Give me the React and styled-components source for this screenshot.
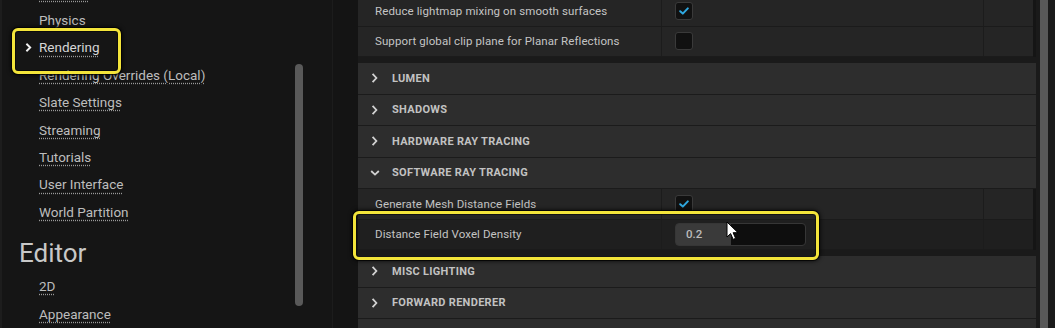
import React from 'react';
import styled, { createGlobalStyle } from 'styled-components';

const Global = createGlobalStyle`
  html, body {
    margin: 0;
    padding: 0;
    background: #151515;
    overflow: hidden;
  }
  * {
    box-sizing: border-box;
  }
`;

const Page = styled.div`
  position: relative;
  display: flex;
  width: 1055px;
  height: 328px;
  overflow: hidden;
  background: #151515;
  font-family: Roboto, 'Liberation Sans', sans-serif;
`;

/* left settings tree */
const Sidebar = styled.div`
  display: flex;
  width: 332px;
  border-left: 2px solid #1d1d1d;
  background: #151515;
`;

const NavList = styled.div`
  flex: 1;
  display: flex;
  flex-direction: column;
  margin-top: -21px;
`;

const NavItem = styled.div`
  display: flex;
  align-items: center;
  height: 27.4px;
  flex-shrink: 0;
  padding-left: ${p => (p.active ? '22px' : '37px')};
  font-size: 13.5px;
  color: ${p => (p.active ? '#d6d6d6' : '#bdbdbd')};

  span {
    text-decoration: underline dotted #9a9a9a;
    text-underline-offset: 3px;
  }
`;

const NavChevron = styled.svg`
  width: 9px;
  height: 11px;
  margin-right: 6px;
`;

const SectionTitle = styled.div`
  height: 40px;
  flex-shrink: 0;
  display: flex;
  align-items: center;
  padding-left: 17px;
  margin-top: 7px;
  font-size: 26px;
  color: #c8c8c8;
`;

const SideTrack = styled.div`
  width: 8px;
  margin-right: 29px;
`;

const Thumb = styled.div`
  width: 8px;
  height: ${p => p.h}px;
  margin-top: ${p => p.top}px;
  border-radius: 4px;
  background: #595959;
`;

const Gutter = styled.div`
  width: 26px;
  border-left: 1px solid #1c1c1c;
  background: #141414;
`;

/* details panel */
const Main = styled.div`
  flex: 1;
  display: flex;
`;

const Rows = styled.div`
  width: 678px;
  display: flex;
  flex-direction: column;
  margin-top: -4px;
`;

const PropRow = styled.div`
  display: grid;
  grid-template-columns: 304px 322px 1fr;
  height: 30.5px;
  flex-shrink: 0;
  background: ${p => (p.dim ? '#1f1f1f' : '#252525')};
  border-bottom: 1px solid #1b1b1b;
  margin-right: 3px;
`;

const NameCell = styled.div`
  display: flex;
  align-items: center;
  padding-left: 17px;
  font-size: 11.5px;
  letter-spacing: 0.1px;
  color: #c4c4c4;
  border-right: 1px solid #1c1c1c;
`;

const ValueCell = styled.div`
  display: flex;
  align-items: center;
  padding-left: 13px;
  border-right: 1px solid #1c1c1c;
`;

const Box = styled.div`
  width: 18px;
  height: 18px;
  border-radius: 3px;
  background: #111;
  border: 1px solid #3a3a3a;
  display: flex;
  align-items: center;
  justify-content: center;
`;

const NumberField = styled.div`
  width: 131px;
  height: 23px;
  display: flex;
  align-items: center;
  padding-left: 10px;
  border: 1px solid #363636;
  border-radius: 4px;
  background: linear-gradient(to right, #3a3a3a 55px, #0e0e0e 55px);
  font-size: 11.5px;
  font-weight: 500;
  color: #bcbcbc;
`;

const Header = styled.div`
  display: flex;
  align-items: center;
  height: 31.5px;
  flex-shrink: 0;
  padding-left: 12px;
  background: #2d2d2d;
  border-bottom: 1px solid #1b1b1b;
  font-size: 11px;
  font-weight: 700;
  letter-spacing: 0.3px;
  color: #c2c2c2;
`;

const HeaderChevron = styled.svg`
  width: 10px;
  height: 12px;
  margin-right: 12px;
`;

const Gap = styled.div`
  height: 6px;
  flex-shrink: 0;
  background: #1a1a1a;
`;

const RightTrack = styled.div`
  width: 19px;
  padding-left: 4px;
  background: #1a1a1a;
`;

const RightBar = styled.div`
  width: 8px;
  height: 100%;
  background: #585858;
`;

/* overlays */
const Highlight = styled.div`
  position: absolute;
  left: ${p => p.x}px;
  top: ${p => p.y}px;
  width: ${p => p.w}px;
  height: ${p => p.h}px;
  border: 3px solid #f3e43a;
  border-radius: 6px;
  box-shadow: 0 0 0 1px rgba(0, 0, 0, 0.7), 0 0 4px 1px rgba(0, 0, 0, 0.8),
    inset 0 0 0 1px rgba(0, 0, 0, 0.5);
  pointer-events: none;
`;

const Cursor = styled.svg`
  position: absolute;
  left: 726px;
  top: 221px;
  width: 14px;
  height: 20px;
`;

const Check = () => (
  <svg width="10" height="8" viewBox="0 0 10 8">
    <path d="M1.2 4.2 L3.8 6.6 L8.8 1.4" fill="none" stroke="#2fa8e0" strokeWidth="2" strokeLinecap="round" strokeLinejoin="round" />
  </svg>
);

const Chevron = ({ down }) => (
  <HeaderChevron viewBox="0 0 10 12">
    {down ? (
      <path d="M1.2 4 L5 7.6 L8.8 4" fill="none" stroke="#d2d2d2" strokeWidth="1.8" />
    ) : (
      <path d="M2.6 1.8 L6.4 6 L2.6 10.2" fill="none" stroke="#d2d2d2" strokeWidth="1.8" />
    )}
  </HeaderChevron>
);

const navTop = ['Network', 'Physics', 'Rendering', 'Rendering Overrides (Local)', 'Slate Settings', 'Streaming', 'Tutorials', 'User Interface', 'World Partition'];
const navEditor = ['2D', 'Appearance'];

const Prop = ({ name, dim, children }) => (
  <PropRow dim={dim}>
    <NameCell>{name}</NameCell>
    <ValueCell>{children}</ValueCell>
    <div />
  </PropRow>
);

const App = () => {
  return (
    <Page>
      <Global />
      <Sidebar>
        <NavList>
          {navTop.map(n => (
            <NavItem key={n} active={n === 'Rendering'}>
              {n === 'Rendering' && (
                <NavChevron viewBox="0 0 9 11">
                  <path d="M2.4 1.8 L6.2 5.5 L2.4 9.2" fill="none" stroke="#f2f2f2" strokeWidth="1.9" />
                </NavChevron>
              )}
              <span>{n}</span>
            </NavItem>
          ))}
          <SectionTitle>Editor</SectionTitle>
          {navEditor.map(n => (
            <NavItem key={n}>
              <span>{n}</span>
            </NavItem>
          ))}
        </NavList>
        <SideTrack>
          <Thumb top={64} h={242} />
        </SideTrack>
      </Sidebar>
      <Gutter />
      <Main>
        <Rows>
          <Prop name="Reduce lightmap mixing on smooth surfaces">
            <Box><Check /></Box>
          </Prop>
          <Prop name="Support global clip plane for Planar Reflections">
            <Box />
          </Prop>
          <Gap />
          <Header><Chevron />LUMEN</Header>
          <Header><Chevron />SHADOWS</Header>
          <Header><Chevron />HARDWARE RAY TRACING</Header>
          <Header><Chevron down />SOFTWARE RAY TRACING</Header>
          <Prop name="Generate Mesh Distance Fields">
            <Box><Check /></Box>
          </Prop>
          <Prop name="Distance Field Voxel Density" dim>
            <NumberField>0.2</NumberField>
          </Prop>
          <Gap />
          <Header><Chevron />MISC LIGHTING</Header>
          <Header><Chevron />FORWARD RENDERER</Header>
          <Header />
        </Rows>
        <RightTrack>
          <RightBar />
        </RightTrack>
      </Main>

      <Highlight x={12} y={28} w={109} h={46} />
      <Highlight x={353} y={211} w={466} h={49} />
      <Cursor viewBox="0 0 14 20">
        <path d="M1 1 L1 16 L4.6 12.6 L7.2 18.4 L9.6 17.3 L7.1 11.7 L12 11.7 Z" fill="#ffffff" stroke="#000" strokeWidth="1" strokeLinejoin="round" />
      </Cursor>
    </Page>
  );
};

export default App;
